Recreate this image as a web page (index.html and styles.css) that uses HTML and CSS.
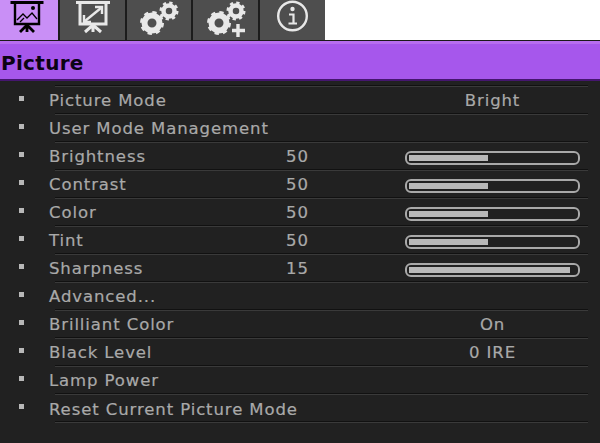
FILE: index.html
```html
<!DOCTYPE html>
<html lang="en">
<head>
<meta charset="utf-8">
<title>Picture</title>
<link rel="stylesheet" href="styles.css">
</head>
<body>
<nav class="tabs">
  <div class="tab tab-active">
    <svg class="icon" width="58" height="40" viewBox="0 0 58 40" fill="none" stroke="#000">
      <path d="M10.500 2.500H43.500" stroke-width="3"/>
      <path d="M15 3V24H39V3" stroke-width="2.400"/>
      <path d="M17 20L23 14L27 18L32 13L37 19M20 22L24 18" stroke-width="1.300"/>
      <circle cx="33" cy="8" r="2" fill="#000" stroke="none"/>
      <path d="M27 25L20 32M27 25V32M27 25L34 32" stroke-width="2.800"/>
    </svg>
  </div>
  <div class="tab">
    <svg class="icon" width="65" height="40" viewBox="0 0 65 40" fill="none" stroke="#e8e8e8">
      <path d="M16 2.500H50" stroke-width="3"/>
      <path d="M20 3V24H46V3" stroke-width="3"/>
      <path d="M25 21L41 8" stroke-width="2.400"/>
      <path d="M24 15V22H31M35 7H42V14" stroke-width="2.400"/>
      <path d="M33 25L25 32M33 25V32M33 25L41 32" stroke-width="3"/>
    </svg>
  </div>
  <div class="tab">
    <svg class="icon" width="64" height="40" viewBox="0 0 64 40" fill="none">
      <g stroke="#e8e8e8">
        <circle cx="25" cy="23" r="7.500" stroke-width="6"/>
        <circle cx="25" cy="23" r="10.500" stroke-width="3" stroke-dasharray="4.200 4.050"/>
        <circle cx="42" cy="11" r="5.500" stroke-width="4.500"/>
        <circle cx="42" cy="11" r="8" stroke-width="3" stroke-dasharray="3.200 3.080"/>
      </g>
    </svg>
  </div>
  <div class="tab">
    <svg class="icon" width="65" height="40" viewBox="0 0 65 40" fill="none">
      <g stroke="#e8e8e8">
        <circle cx="26" cy="23" r="7.500" stroke-width="6"/>
        <circle cx="26" cy="23" r="10.500" stroke-width="3" stroke-dasharray="4.200 4.050"/>
        <circle cx="43" cy="11" r="5.500" stroke-width="4.500"/>
        <circle cx="43" cy="11" r="8" stroke-width="3" stroke-dasharray="3.200 3.080"/>
        <path d="M45 24V37M39 30.500H52" stroke-width="3.400"/>
      </g>
    </svg>
  </div>
  <div class="tab">
    <svg class="icon" width="65" height="40" viewBox="0 0 65 40" fill="none" stroke="#e8e8e8">
      <circle cx="32.500" cy="16" r="14.300" stroke-width="2.400"/>
      <circle cx="32.500" cy="9" r="2.200" fill="#e8e8e8" stroke="none"/>
      <path d="M29 14.500H33.500V23M28.500 23.500H37" stroke-width="2.200"/>
    </svg>
  </div>
</nav>
<header class="title">Picture</header>
<main class="list">
  <div class="row"><span class="bullet"></span><span>Picture Mode</span><span></span><span class="value">Bright</span></div>
  <div class="row"><span class="bullet"></span><span>User Mode Management</span></div>
  <div class="row"><span class="bullet"></span><span>Brightness</span><span>50</span><span class="bar"><span class="fill" style="width:49%"></span></span></div>
  <div class="row"><span class="bullet"></span><span>Contrast</span><span>50</span><span class="bar"><span class="fill" style="width:49%"></span></span></div>
  <div class="row"><span class="bullet"></span><span>Color</span><span>50</span><span class="bar"><span class="fill" style="width:49%"></span></span></div>
  <div class="row"><span class="bullet"></span><span>Tint</span><span>50</span><span class="bar"><span class="fill" style="width:49%"></span></span></div>
  <div class="row"><span class="bullet"></span><span>Sharpness</span><span>15</span><span class="bar"><span class="fill" style="width:100%"></span></span></div>
  <div class="row"><span class="bullet"></span><span>Advanced...</span></div>
  <div class="row"><span class="bullet"></span><span>Brilliant Color</span><span></span><span class="value">On</span></div>
  <div class="row"><span class="bullet"></span><span>Black Level</span><span></span><span class="value">0 IRE</span></div>
  <div class="row"><span class="bullet"></span><span>Lamp Power</span></div>
  <div class="row row-last"><span class="bullet"></span><span>Reset Current Picture Mode</span></div>
</main>
</body>
</html>
```
FILE: styles.css
```css
* { box-sizing: border-box; }
html, body { margin: 0; height: 443px; overflow: hidden; }
body {
  background: #212121;
  font-family: "DejaVu Sans", sans-serif;
}
.tabs {
  display: flex;
  height: 41px;
  gap: 2px;
  background: #fff;
  border-bottom: 1px solid #1a1a1a;
  padding-right: 275px;
}
.tab {
  flex: 65px 1 1;
  background: #4e4e4e;
  box-shadow: 2px 0 0 #1c1c1c;
}
.tab:last-child { box-shadow: none; }
.tab-active { flex: 58px 0 0; background: #c98ff6; }
.icon { display: block; }
.title {
  height: 40px;
  padding-left: 1px;
  background: linear-gradient(#b76df0 0 3px, #a657ec 3px 100%);
  border-bottom: 2px solid #45166f;
  color: #0b0314;
  font-size: 20px;
  font-weight: 700;
  letter-spacing: .3px;
  line-height: 45px;
}
.list {
  margin-top: 4px;
  padding-top: 2px;
  background: linear-gradient(#111, #111) 55px 0 / 533px 1px no-repeat, linear-gradient(#3a3a3a, #3a3a3a) 55px 1px / 533px 1px no-repeat;
}
.row {
  display: grid;
  grid-template-columns: 49px 237px 119px 175px;
  align-items: center;
  height: 28px;
  padding-bottom: 2px;
  color: #a9a9a9;
  font-size: 16.500px;
  letter-spacing: .9px;
  white-space: nowrap;
  -webkit-text-stroke: .2px #a9a9a9;
  background: linear-gradient(#111, #111) 55px 26px / 533px 1px no-repeat, linear-gradient(#3a3a3a, #3a3a3a) 55px 27px / 533px 1px no-repeat;
}
.row-last { padding-bottom: 0; }
.bullet {
  width: 5px;
  height: 5px;
  margin: 0 0 3px 19px;
  background: #b8b8b8;
}
.row-last .bullet { margin-bottom: 5px; }
.value { text-align: center; }
.bar {
  display: block;
  height: 14px;
  margin-top: 4px;
  padding: 2px 8px 2px 2px;
  border: 2px solid #a9a9a9;
  border-radius: 6px;
}
.fill {
  display: block;
  height: 6px;
  max-width: 100%;
  background: #b9b9b9;
}
```
